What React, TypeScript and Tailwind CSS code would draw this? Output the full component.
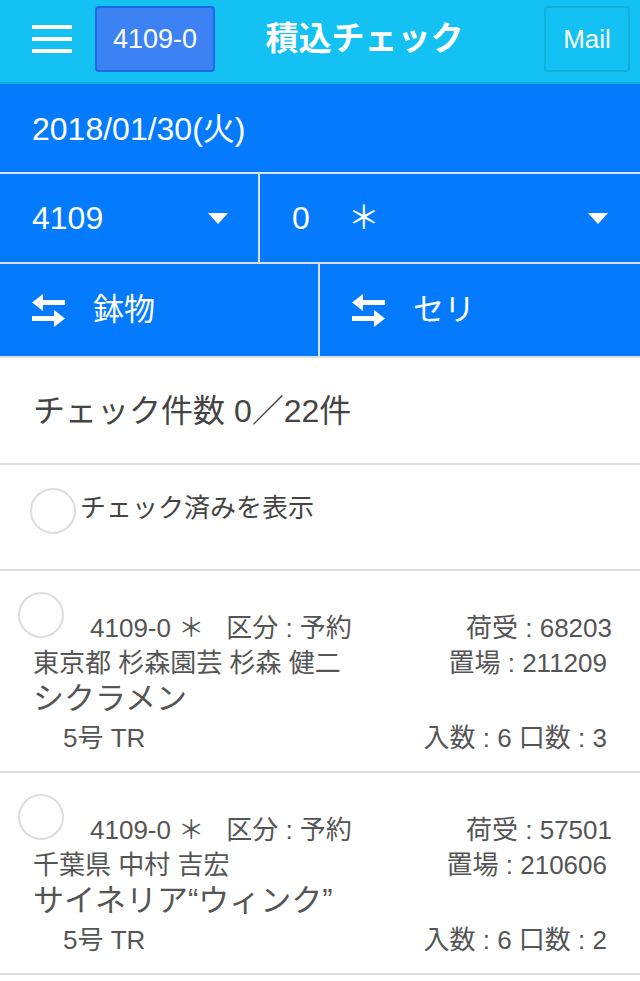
import React from "react";

const font = { fontFamily: '"Liberation Sans", "Noto Sans CJK JP", sans-serif' };

function SwapIcon() {
  return (
    <svg width="33" height="33" viewBox="0 0 33 33" fill="white">
      <path d="M0 8.5 L11 0 L11 6 L33 6 L33 11 L11 11 L11 17 Z" />
      <path d="M33 24.5 L22 16 L22 22 L0 22 L0 27 L22 27 L22 33 Z" />
    </svg>
  );
}

function Caret() {
  return (
    <svg width="20" height="11" viewBox="0 0 20 11" fill="white">
      <path d="M0 0 L20 0 L10 11 Z" />
    </svg>
  );
}

type Item = {
  code: string;
  niuke: string;
  name: string;
  okiba: string;
  product: string;
  size: string;
  irisu: number;
  kuchisu: number;
};

const items: Item[] = [
  {
    code: "4109-0 ＊",
    niuke: "68203",
    name: "東京都 杉森園芸 杉森 健二",
    okiba: "211209",
    product: "シクラメン",
    size: "5号 TR",
    irisu: 6,
    kuchisu: 3,
  },
  {
    code: "4109-0 ＊",
    niuke: "57501",
    name: "千葉県 中村 吉宏",
    okiba: "210606",
    product: "サイネリア“ウィンク”",
    size: "5号 TR",
    irisu: 6,
    kuchisu: 2,
  },
];

function ItemRow({ item }: { item: Item }) {
  return (
    <div className="border-b-2 border-[#dddddd] pl-[18px] pt-[21px] pb-[15px] text-[#555555]">
      <div className="flex items-start">
        <div className="w-[46px] h-[46px] rounded-full border-2 border-[#dddddd] shrink-0" />
        <div className="flex-1 flex justify-between mt-[19px] pl-[26px] pr-[28px] text-[26px] leading-[35px]">
          <span>
            {item.code}
            <span className="ml-[22px]">区分 : 予約</span>
          </span>
          <span>荷受 : {item.niuke}</span>
        </div>
      </div>
      <div className="flex justify-between pl-[15px] pr-[33px] text-[26px] leading-[35px]">
        <span>{item.name}</span>
        <span>置場 : {item.okiba}</span>
      </div>
      <div className="pl-[15px] text-[31px] leading-[36px]">{item.product}</div>
      <div className="flex justify-between mt-[3px] pl-[45px] pr-[33px] text-[26px] leading-[36px]">
        <span>{item.size}</span>
        <span>
          入数 : {item.irisu} 口数 : {item.kuchisu}
        </span>
      </div>
    </div>
  );
}

export default function App() {
  return (
    <div className="w-[640px] min-h-[981px] bg-white" style={font}>
      {/* header */}
      <div className="h-[84px] bg-[#13c1f2] border-b-2 border-[#11ade0] flex items-center pl-[32px] pr-[10px] pb-[4px]">
        <div className="flex flex-col gap-[8px] w-[40px]">
          <div className="h-[4px] bg-white" />
          <div className="h-[4px] bg-white" />
          <div className="h-[4px] bg-white" />
        </div>
        <div className="ml-[23px] w-[120px] h-[66px] bg-[#3d82f5] border-2 border-[#1a6ae6] rounded-[4px] flex items-center justify-center text-white text-[27px]">
          4109-0
        </div>
        <div className="flex-1 text-center text-white font-bold text-[33px] pr-[30px]">積込チェック</div>
        <div className="w-[86px] h-[66px] border-2 border-[#10afdc] rounded-[4px] flex items-center justify-center text-white text-[26px]">
          Mail
        </div>
      </div>

      {/* date */}
      <div className="h-[88px] bg-[#047bfe] flex items-center px-[32px] pt-[2px] text-white text-[32px]">
        2018/01/30(火)
      </div>

      {/* selects */}
      <div className="flex h-[92px] bg-[#047bfe] border-t-2 border-b-2 border-[#dddddd] text-white text-[32px]">
        <div className="w-[258px] flex items-center justify-between pl-[32px] pr-[30px]">
          <span>4109</span>
          <Caret />
        </div>
        <div className="w-[2px] bg-[#dddddd]" />
        <div className="flex-1 flex items-center justify-between pl-[32px] pr-[32px]">
          <span>
            0<span className="ml-[38px]">＊</span>
          </span>
          <Caret />
        </div>
      </div>

      {/* category buttons */}
      <div className="flex h-[94px] bg-[#047bfe] border-b-2 border-[#dddddd] text-white text-[31px]">
        <div className="w-[318px] flex items-center pl-[32px] gap-[28px]">
          <SwapIcon />
          <span>鉢物</span>
        </div>
        <div className="w-[2px] bg-[#dddddd]" />
        <div className="flex-1 flex items-center pl-[32px] gap-[28px]">
          <SwapIcon />
          <span>セリ</span>
        </div>
      </div>

      {/* count */}
      <div className="h-[107px] border-b-2 border-[#dddddd] flex items-center pl-[33px] text-[#444444] text-[32px]">
        チェック件数 0／22件
      </div>

      {/* show checked */}
      <div className="h-[106px] border-b-2 border-[#dddddd] flex items-start pl-[30px] pt-[23px]">
        <div className="w-[46px] h-[46px] rounded-full border-2 border-[#dddddd] shrink-0" />
        <span className="ml-[4px] mt-[2px] text-[26px] leading-[36px] text-[#444444]">チェック済みを表示</span>
      </div>

      {items.map((item, i) => (
        <ItemRow key={i} item={item} />
      ))}
    </div>
  );
}
